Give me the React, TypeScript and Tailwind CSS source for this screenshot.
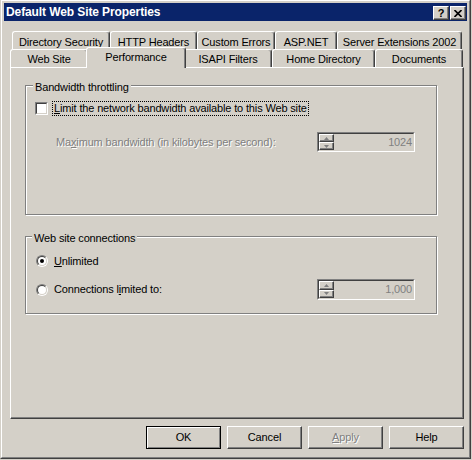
import React from "react";

const raised =
  "border border-t-white border-l-white border-r-[#404040] border-b-[#404040] shadow-[inset_-1px_-1px_0_#808080]";

function Tab({ w, label, row1 }: { w: string; label: string; row1?: boolean }) {
  return (
    <div
      className={`${w} h-[18px] shrink-0 flex justify-center leading-[13px] ${row1 ? "pt-[4px]" : "pt-[3px]"} border-t border-l border-r border-t-white border-l-white border-r-[#404040] rounded-t-[3px] shadow-[inset_-1px_0_0_#808080]`}
    >
      <span className="whitespace-nowrap">{label}</span>
    </div>
  );
}

function Arrow({ up }: { up?: boolean }) {
  return (
    <svg width="5" height="3" viewBox="0 0 5 3" className="block">
      {up ? (
        <polygon points="2.5,0 5,3 0,3" fill="#808080" />
      ) : (
        <polygon points="0,0 5,0 2.5,3" fill="#808080" />
      )}
    </svg>
  );
}

function SpinBox({ value, tall }: { value: string; tall?: boolean }) {
  return (
    <div
      className={`w-[98px] ${tall ? "h-[21px]" : "h-[20px]"} shrink-0 border border-t-[#808080] border-l-[#808080] border-r-white border-b-white`}
    >
      <div className="h-full flex border border-t-[#404040] border-l-[#404040] border-r-[#d4d0c8] border-b-[#d4d0c8]">
        <div className="w-[15px] flex flex-col">
          <div className={`flex-1 flex items-center justify-center ${raised}`}>
            <Arrow up />
          </div>
          <div className={`flex-1 flex items-center justify-center ${raised}`}>
            <Arrow />
          </div>
        </div>
        <div className="flex-1 flex items-center justify-end pr-[1px] text-[#808080] leading-[13px]">
          {value}
        </div>
      </div>
    </div>
  );
}

function Radio({ checked }: { checked?: boolean }) {
  return (
    <span className="w-[12px] h-[12px] shrink-0 rounded-full border border-t-[#808080] border-l-[#808080] border-r-white border-b-white flex">
      <span className="flex-1 rounded-full border border-t-[#404040] border-l-[#404040] border-r-[#d4d0c8] border-b-[#d4d0c8] bg-white flex items-center justify-center">
        {checked && <span className="w-[4px] h-[4px] rounded-full bg-black" />}
      </span>
    </span>
  );
}

function Button({ children, def, disabled }: { children: React.ReactNode; def?: boolean; disabled?: boolean }) {
  const frame = def
    ? "border border-black shadow-[inset_1px_1px_0_#fff,inset_-1px_-1px_0_#808080]"
    : raised;
  return (
    <div
      className={`w-[75px] h-[23px] shrink-0 flex items-center justify-center leading-[13px] ${frame} ${disabled ? "text-[#808080] [text-shadow:1px_1px_0_#fff]" : "text-black"}`}
    >
      {children}
    </div>
  );
}

export default function App() {
  return (
    <div className="w-[472px] h-[460px] overflow-hidden bg-[#d4d0c8] font-['Liberation_Sans',Arial,sans-serif] text-[11px] tracking-[-0.15px] text-black">
      <div className="mt-[-1px] w-[471px] h-[460px] border border-t-[#d4d0c8] border-l-[#d4d0c8] border-r-[#404040] border-b-[#404040]">
        <div className="h-full flex flex-col p-[2px] border border-t-white border-l-white border-r-[#808080] border-b-[#808080]">
          {/* Title bar */}
          <div className="h-[18px] shrink-0 bg-[#0a246a] flex items-start pl-[2px] pr-[1px]">
            <span className="text-white font-bold text-[12px] tracking-[-0.1px] leading-[18px] whitespace-nowrap">
              Default Web Site Properties
            </span>
            <div className="ml-auto mt-[3px] flex gap-[1px]">
              <div className={`w-[16px] h-[14px] bg-[#d4d0c8] flex items-center justify-center ${raised}`}>
                <span className="font-bold text-[11px] leading-[11px] text-black tracking-normal">?</span>
              </div>
              <div className={`w-[16px] h-[14px] bg-[#d4d0c8] flex items-center justify-center ${raised}`}>
                <svg width="8" height="7" viewBox="0 0 8 7" className="block">
                  <path d="M0.5 0 L7.5 7 M7.5 0 L0.5 7" stroke="#000" strokeWidth="1.6" />
                </svg>
              </div>
            </div>
          </div>

          {/* Tab rows */}
          <div className="mt-[10px] ml-[8px] flex">
            <Tab w="w-[98px]" label="Directory Security" row1 />
            <Tab w="w-[87px]" label="HTTP Headers" row1 />
            <Tab w="w-[78px]" label="Custom Errors" row1 />
            <Tab w="w-[62px]" label="ASP.NET" row1 />
            <Tab w="w-[125px]" label="Server Extensions 2002" row1 />
          </div>
          <div className="ml-[6px] flex h-[18px]">
            <Tab w="w-[78px]" label="Web Site" />
            <div className="w-[96px] h-[18px] shrink-0">
              <div className="relative z-10 ml-[-2px] mt-[-2px] w-[100px] h-[21px] bg-[#d4d0c8] flex justify-center pt-[3px] leading-[13px] border-t border-l border-r border-t-white border-l-white border-r-[#404040] rounded-t-[3px] shadow-[inset_-1px_0_0_#808080]">
                <span className="whitespace-nowrap">Performance</span>
              </div>
            </div>
            <Tab w="w-[88px]" label="ISAPI Filters" />
            <Tab w="w-[103px]" label="Home Directory" />
            <Tab w="w-[88px]" label="Documents" />
          </div>

          {/* Panel */}
          <div className="ml-[6px] w-[454px] h-[352px] shrink-0 border border-t-white border-l-white border-r-[#404040] border-b-[#404040] shadow-[inset_-1px_-1px_0_#808080] pl-[14px] pt-[17px] flex flex-col">
            {/* Bandwidth throttling */}
            <div className="relative w-[412px] h-[130px] shrink-0 border border-[#808080] shadow-[inset_1px_1px_0_#fff,1px_1px_0_#fff] pl-[9px] pr-[21px] pt-[14px] flex flex-col">
              <span className="absolute left-[7px] top-[-5px] px-[2px] bg-[#d4d0c8] leading-[13px] whitespace-nowrap">
                Bandwidth throttling
              </span>
              <div className="flex items-center h-[16px]">
                <span className="w-[13px] h-[13px] shrink-0 flex border border-t-[#808080] border-l-[#808080] border-r-white border-b-white">
                  <span className="flex-1 bg-white border border-t-[#404040] border-l-[#404040] border-r-[#d4d0c8] border-b-[#d4d0c8]" />
                </span>
                <span className="ml-[4px] mt-[1px] px-[1px] border border-dotted border-black leading-[13px] whitespace-nowrap">
                  <span className="underline">L</span>imit the network bandwidth available to this Web site
                </span>
              </div>
              <div className="mt-[16px] flex items-center">
                <span className="ml-[21px] text-[#808080] [text-shadow:1px_1px_0_#fff] leading-[13px] whitespace-nowrap">
                  Ma<span className="underline">x</span>imum bandwidth (in kilobytes per second):
                </span>
                <div className="ml-auto">
                  <SpinBox value="1024" />
                </div>
              </div>
            </div>

            {/* Web site connections */}
            <div className="relative mt-[21px] w-[412px] h-[78px] shrink-0 border border-[#808080] shadow-[inset_1px_1px_0_#fff,1px_1px_0_#fff] pl-[10px] pr-[21px] pt-[14px] flex flex-col">
              <span className="absolute left-[6px] top-[-5px] px-[2px] bg-[#d4d0c8] leading-[13px] whitespace-nowrap">
                Web site connections
              </span>
              <div className="h-[20px] flex items-center">
                <Radio checked />
                <span className="ml-[6px] leading-[13px] whitespace-nowrap">
                  <span className="underline">U</span>nlimited
                </span>
              </div>
              <div className="mt-[8px] h-[21px] flex items-center">
                <Radio />
                <span className="ml-[6px] leading-[13px] whitespace-nowrap">
                  Connections l<span className="underline">i</span>mited to:
                </span>
                <div className="ml-auto">
                  <SpinBox value="1,000" tall />
                </div>
              </div>
            </div>
          </div>

          {/* Buttons */}
          <div className="mt-[7px] mr-[3px] flex justify-end gap-[6px]">
            <Button def>OK</Button>
            <Button>Cancel</Button>
            <Button disabled>
              <span className="underline">A</span>pply
            </Button>
            <Button>Help</Button>
          </div>
        </div>
      </div>
    </div>
  );
}
